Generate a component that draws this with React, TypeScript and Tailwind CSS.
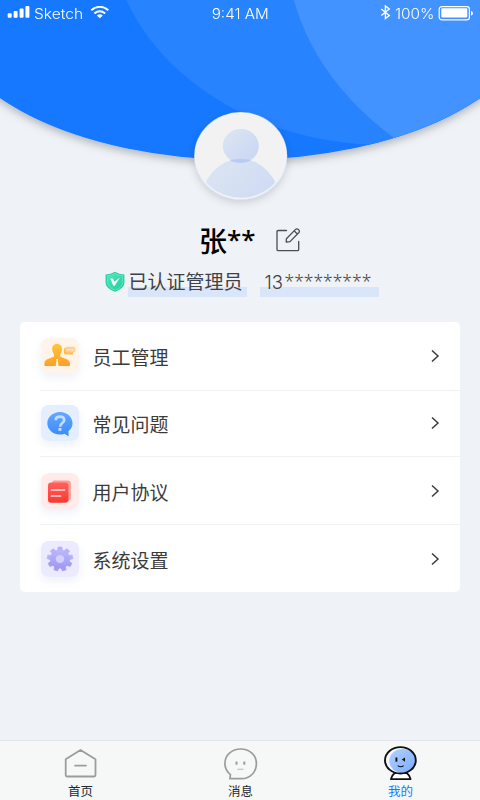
import type { ReactNode } from 'react'

const StatusBar = () => (
    <div className="absolute inset-x-0 top-0 flex h-[26px] items-center justify-between pl-[7px] pr-[6px] text-white font-['Inter','Liberation_Sans',sans-serif] font-light text-[14px]">
        <div className="flex w-[150px] items-center">
            <svg width="23" height="14" viewBox="0 0 23 14" fill="currentColor">
                <rect x="0.7" y="7.2" width="4" height="4.6" rx="1" />
                <rect x="6.6" y="5.1" width="4" height="6.7" rx="1" />
                <rect x="12.6" y="2.4" width="4" height="9.4" rx="1" />
                <rect x="18.4" y="0" width="4" height="11.8" rx="1" />
            </svg>
            <span className="ml-[4px] w-[49px] origin-left scale-x-[1.11]">Sketch</span>
            <svg className="ml-[7px]" width="20" height="14" viewBox="0 0 20 14" fill="none" stroke="currentColor" strokeWidth="2">
                <path d="M1.3 4.2C6.2 -.3 13.4 -.3 18.3 4.2" />
                <path d="M4.4 7.5c3.3-2.7 7.5-2.7 10.8 0" />
                <path d="M6.8 9.4c2-1.4 4-1.4 6 0l-3 2.8z" fill="currentColor" stroke="none" />
            </svg>
        </div>
        <span className="scale-x-[1.09] pt-px">9:41 AM</span>
        <div className="flex w-[150px] items-center justify-end">
            <svg width="11" height="16" viewBox="0 0 11 16" fill="none" stroke="currentColor" strokeWidth="1.4">
                <path d="M1.3 4l8 6.5-3.9 3V1l3.900 3-8 6.5" />
            </svg>
            <span className="ml-[4px] mr-[3px] w-[40px] origin-left scale-x-[1.1]">100%</span>
            <svg width="36" height="15" viewBox="0 0 36 15">
                <rect x="1.2" y="0" width="30.2" height="13.2" rx="2.6" fill="none" stroke="white" strokeWidth="1.2" className="translate-y-[0.6px]" />
                <rect x="3.3" y="2.3" width="26" height="9.2" rx="1" fill="white" />
                <path d="M33 4.9c2.6.6 2.6 4 0 4.6z" fill="white" />
            </svg>
        </div>
    </div>
)

const Header = () => (
    <div className="relative h-[160px]">
        <svg className="block overflow-visible" width="480" height="160" viewBox="0 0 480 160">
            <defs>
                <clipPath id="dome">
                    <ellipse cx="240" cy="8.5" rx="298" ry="151.3" />
                </clipPath>
                <filter id="domeShadow" x="-10%" y="-10%" width="120%" height="130%">
                    <feDropShadow dx="0" dy="3.5" stdDeviation="4.5" floodColor="#000" floodOpacity="0.26" />
                </filter>
            </defs>
            <ellipse cx="240" cy="8.5" rx="298" ry="151.3" fill="#1478ff" filter="url(#domeShadow)" />
            <g clipPath="url(#dome)">
                <ellipse cx="385" cy="-75" rx="275" ry="220" fill="#2883ff" />
                <ellipse cx="615" cy="-57" rx="329" ry="263" fill="#4292ff" />
            </g>
        </svg>
        <StatusBar />
    </div>
)

const Avatar = () => (
    <svg className="-mt-[49px] ml-[2px] block overflow-visible" width="94" height="90" viewBox="0 0 94 90">
        <defs>
            <linearGradient id="person" x1="0" y1="0" x2="1" y2="1">
                <stop offset="0" stopColor="#dce6f2" />
                <stop offset="1" stopColor="#c8d5f4" />
            </linearGradient>
            <clipPath id="avatarClip">
                <ellipse cx="46.7" cy="44.8" rx="44.7" ry="42" />
            </clipPath>
            <filter id="avatarShadow" x="-20%" y="-20%" width="140%" height="150%">
                <feDropShadow dx="0" dy="3" stdDeviation="4" floodColor="#000" floodOpacity="0.16" />
            </filter>
        </defs>
        <ellipse cx="46.7" cy="44.8" rx="46.5" ry="43.7" fill="#cfe1fb" filter="url(#avatarShadow)" />
        <ellipse cx="46.7" cy="45" rx="45.5" ry="42.8" fill="#f2f2f2" stroke="#f3f6fa" strokeWidth="1" />
        <g clipPath="url(#avatarClip)">
            <ellipse cx="46.5" cy="92" rx="39.5" ry="44" fill="url(#person)" />
            <ellipse cx="46.8" cy="35" rx="18" ry="17" fill="url(#person)" />
            <path d="M35.5 49.3q11-2.8 22 0q-4.5 2.7-11 2.7t-11-2.7z" fill="#b9cbf2" />
        </g>
    </svg>
)

const EditIcon = () => (
    <svg width="26" height="26" viewBox="0 0 26 26" fill="none" stroke="#4a4d51" strokeWidth="1.3" strokeLinejoin="round" strokeLinecap="round">
        <path d="M11.5 3.5H3.2q-1.2 0-1.2 1.2v17.8q0 1.2 1.2 1.2h19.3q1.2 0 1.2-1.2V14.5" />
        <path d="M11.4 11.7L20.3 2.6q1.5-1.5 3.2 0q1.7 1.6.2 3.2l-8.7 8.8-3.800.4zM19.3 4l3.1 3" />
    </svg>
)

const ShieldIcon = () => (
    <svg width="20" height="22" viewBox="0 0 20 22">
        <defs>
            <linearGradient id="shield" x1="0" y1="0" x2="1" y2="1">
                <stop offset="0" stopColor="#4be6bd" />
                <stop offset="1" stopColor="#25cfa0" />
            </linearGradient>
        </defs>
        <path d="M10 .8q4.2 2.7 9.4 2.6v8.2c0 4.5-4.7 7.8-9.4 9.2-4.7-1.4-9.4-4.7-9.4-9.2V3.4Q5.8 3.5 10 .8z" fill="#25cda0" />
        <path d="M10 2.5q3.6 2.1 7.7 2.2v6.7c0 3.7-3.9 6.4-7.7 7.7-3.8-1.3-7.7-4-7.7-7.7V4.7Q6.4 4.6 10 2.5z" fill="url(#shield)" stroke="#7aefce" strokeWidth=".7" />
        <path d="M5.2 7.6l2.7-.2 1.6 3.3 5.4-4.3-5.2 8.4H8.3z" fill="white" />
    </svg>
)

const StaffIcon = () => (
    <svg width="38" height="36" viewBox="0 0 38 36">
        <defs>
            <linearGradient id="staff" x1="0" y1="0" x2="0" y2="1">
                <stop offset="0" stopColor="#ffc53a" />
                <stop offset="1" stopColor="#ff9f27" />
            </linearGradient>
        </defs>
        <path d="M16 6c3.6 0 5.2 2.2 5 5.600-.1 2.200-.9 3.600-1.800 4.700v2c2 2 9.700 2.700 9.700 6.700v3.100H3.500V25c0-4 7.500-4.700 9.500-6.700v-2c-.9-1.100-1.700-2.500-1.800-4.700C11 8.200 12.400 6 16 6z" fill="url(#staff)" />
        <path d="M15 21h2.2l-.4 1.700.9 5.400h-3l.8-5.400z" fill="#fff5eb" />
        <path d="M25 9.500h7v7h-7.500q-1.500 0-1.500-1.500v-3.500q0-2 2-2z" fill="#ffbd41" />
        <rect x="24.3" y="8.7" width="10.2" height="5.8" rx="2" fill="#ffd09c" />
        <path d="M26.5 11.6h1.2M29 11.6h1.2M31.5 11.6h1.2" stroke="#fff2dd" strokeWidth="1.2" />
    </svg>
)

const QuestionIcon = () => (
    <svg width="38" height="36" viewBox="0 0 38 36">
        <defs>
            <linearGradient id="question" x1="0" y1="0" x2="0" y2="1">
                <stop offset="0" stopColor="#62a8ff" />
                <stop offset="1" stopColor="#3a89ff" />
            </linearGradient>
        </defs>
        <path d="M19 7c7 0 12.5 5 12.5 11.3 0 3.3-1.5 5.900-4 8l.1 4.900-4.200-2.500c-1.400.6-2.900.9-4.400.9-7 0-12.700-5-12.700-11.300S12 7 19 7z" fill="url(#question)" />
        <path d="M14.7 15.2c0-2.400 1.800-3.600 4.200-3.600s4.300 1.300 4.300 3.400c0 2.900-4.100 3.100-4.100 6.700" fill="none" stroke="#c4deff" strokeWidth="2.7" />
        <rect x="17.5" y="23" width="3" height="2.8" fill="#c4deff" />
    </svg>
)

const AgreementIcon = () => (
    <svg width="38" height="36" viewBox="0 0 38 36">
        <defs>
            <linearGradient id="agreement" x1="0" y1="0" x2="0" y2="1">
                <stop offset="0" stopColor="#ff625c" />
                <stop offset="1" stopColor="#ff3731" />
            </linearGradient>
        </defs>
        <path d="M10 10.5l2.500-3h14.300q3 0 3 3v15.200l-3 3z" fill="#ff9b97" />
        <rect x="7" y="9.4" width="20.4" height="20.3" rx="3" fill="url(#agreement)" />
        <path d="M10.5 17h13M10.5 23h9" stroke="#ffdfdd" strokeWidth="1.7" strokeLinecap="round" />
    </svg>
)

const SettingsIcon = () => (
    <svg width="38" height="36" viewBox="0 0 38 36">
        <defs>
            <linearGradient id="settings" x1="0" y1="0" x2="0" y2="1">
                <stop offset="0" stopColor="#bbb8fb" />
                <stop offset="1" stopColor="#9f98f5" />
            </linearGradient>
        </defs>
        <g transform="translate(19 18) scale(1.06 1)">
            {[0, 40, 80, 120, 160, 200, 240, 280, 320].map(angle => (
                <path key={angle} d="M-2.4-8l.6-4h3.6l.6 4z" fill={angle > 80 && angle < 280 ? '#a39df6' : '#b4b0fa'} stroke={angle > 80 && angle < 280 ? '#a39df6' : '#b4b0fa'} strokeLinejoin="round" strokeWidth=".6" transform={`rotate(${angle})`} />
            ))}
            <circle r="9.5" fill="url(#settings)" />
            <circle r="4" fill="#d3d0ff" />
        </g>
    </svg>
)

interface MenuRowProps {
    title: string
    icon: ReactNode
    className: string
}

const MenuRow = ({ title, icon, className }: MenuRowProps) => (
    <li className="ml-5 flex items-center border-b border-[#eff1f3] pr-5 last:border-b-0">
        <div className={`ml-px h-9 w-[38px] rounded-[8px] shadow-[0_4px_8px_rgba(80,120,190,0.10)] ${className}`}>{icon}</div>
        <span className="ml-[13.5px] flex-1 pt-[2px] text-[19px] leading-7 text-[#3b3b3b]">{title}</span>
        <svg width="10" height="14" viewBox="0 0 10 14" fill="none" stroke="#3c3c3c" strokeWidth="1.5">
            <path d="M2 1.5l6 5.5-6 5.5" />
        </svg>
    </li>
)

const HomeIcon = () => (
    <svg width="34" height="32" viewBox="0 0 34 32" fill="none" stroke="#9b9d9c" strokeWidth="1.8" strokeLinejoin="round" strokeLinecap="round">
        <path d="M2.7 11.3L17.5 2 32.5 11.3v15.7q0 1.5-1.5 1.5H4.2q-1.5 0-1.5-1.5z" />
        <path d="M12 17.600h11" />
    </svg>
)

const MessageIcon = () => (
    <svg className="overflow-visible" width="34" height="32" viewBox="-0.7 0 34 32" fill="none" stroke="#9b9d9c" strokeWidth="1.7" strokeLinejoin="round">
        <path d="M17 1c9 0 15.7 6.200 15.7 14.500C32.7 24 26.5 30.7 18 30.7H6.2l.6-4C3.2 23.7 1.2 20 1.2 15.5 1.2 7.2 8 1 17 1z" />
        <path d="M12.8 13.5v3.2M20.6 13.5v3.2" strokeWidth="2" />
        <path d="M13.8 21.3h6" stroke="#c0c2c1" strokeWidth="1.2" />
    </svg>
)

const MineIcon = () => (
    <svg width="34" height="36" viewBox="0 0 34 36">
        <defs>
            <linearGradient id="mine" x1="0" y1="0" x2="1" y2="1">
                <stop offset="0" stopColor="#b3d0ff" />
                <stop offset="1" stopColor="#79adff" />
            </linearGradient>
        </defs>
        <path d="M11.5 28.2q-3 2.3-3.600 5.900h19.700q-.6-3.600-3.600-5.900z" fill="#fff" stroke="#111" strokeWidth="1.8" strokeLinejoin="round" />
        <ellipse cx="17.4" cy="15.3" rx="15.4" ry="13.2" fill="#f4f8ff" />
        <ellipse cx="19.5" cy="16" rx="13.2" ry="11.9" fill="url(#mine)" />
        <ellipse cx="17.4" cy="15.3" rx="15.4" ry="13.2" fill="none" stroke="#111" strokeWidth="1.9" />
        <path d="M13.4 12.5v4.2" stroke="#111" strokeWidth="1.9" />
        <path d="M22 12.4v4.300l-3.200-2.100z" fill="#111" />
        <path d="M14.7 20.6q3 2.2 6 0" stroke="#111" strokeWidth="1.1" fill="none" />
    </svg>
)

interface TabProps {
    label: string
    icon: ReactNode
    active?: boolean
}

const Tab = ({ label, icon, active }: TabProps) => (
    <button className="flex flex-1 flex-col items-center">
        <span className={active ? 'mt-[4px] h-[37px]' : 'mt-[7px] h-[34px]'}>{icon}</span>
        <span className={`pl-px text-[12.5px] leading-[18px] ${active ? 'text-[#1478ff]' : 'text-[#24262c]'}`}>{label}</span>
    </button>
)

export default function App() {
    return (
        <div className="flex h-[800px] w-[480px] flex-col overflow-hidden bg-[#eff3f8] font-['Noto_Sans_CJK_SC',sans-serif]">
            <Header />
            <section className="relative flex flex-col items-center">
                <Avatar />
                <div className="mt-[21px] flex h-9 w-[280px] items-center">
                    <h1 className="ml-[99px] flex h-9 w-[76px] text-[28px] font-medium leading-9 text-black">
                        张
                        <span className="-mt-px font-['Noto_Sans',sans-serif] text-[26px]">**</span>
                    </h1>
                    <EditIcon />
                </div>
                <div className="mt-[9px] flex h-[30px] items-start pl-[3px] text-[19px] leading-7 text-[#3f4145]">
                    <div className="mt-[4px]">
                        <ShieldIcon />
                    </div>
                    <span className="ml-[3px] h-[30px] w-[119px] bg-linear-to-t from-[#d9e5f8] from-[10px] to-transparent to-[10px] pl-px">已认证管理员</span>
                    <span className="ml-[13px] flex h-[30px] w-[119px] bg-linear-to-t from-[#d9e5f8] from-[10px] to-transparent to-[10px] pl-[5px]">
                        <span className="w-5 pt-px font-['Inter',sans-serif] text-[18.5px] font-light">13</span>
                        <span className="font-['Noto_Sans',sans-serif] text-[17.5px] font-light">*********</span>
                    </span>
                </div>
            </section>

            <ul className="mx-5 mt-[25px] grid h-[270px] grid-rows-[68.8px_66px_68.6px_66.6px] rounded-[5px] bg-white">
                <MenuRow title="员工管理" icon={<StaffIcon />} className="bg-[#fff4ea]" />
                <MenuRow title="常见问题" icon={<QuestionIcon />} className="bg-[#e4eeff]" />
                <MenuRow title="用户协议" icon={<AgreementIcon />} className="bg-[#ffebea]" />
                <MenuRow title="系统设置" icon={<SettingsIcon />} className="bg-[#eceaff]" />
            </ul>

            <nav className="mt-auto flex h-[60px] border-t border-[#e2e5e9] bg-[#f6f8f8]">
                <Tab label="首页" icon={<HomeIcon />} />
                <Tab label="消息" icon={<MessageIcon />} />
                <Tab label="我的" icon={<MineIcon />} active />
            </nav>
        </div>
    )
}
